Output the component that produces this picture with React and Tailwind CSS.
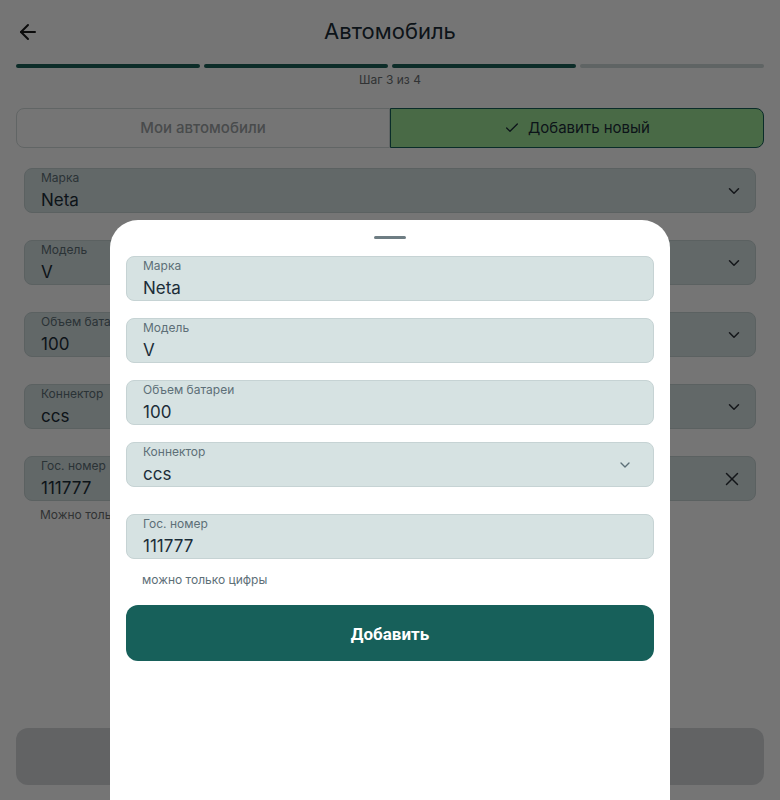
import { ArrowLeft, Check, ChevronDown, X } from 'lucide-react';

const pageFields = [
  { label: 'Марка', value: 'Neta', icon: 'chevron' },
  { label: 'Модель', value: 'V', icon: 'chevron' },
  { label: 'Объем батареи', value: '100', icon: 'chevron' },
  { label: 'Коннектор', value: 'ccs', icon: 'chevron' },
  { label: 'Гос. номер', value: '111777', icon: 'clear' },
];

function Field({ label, value, icon, iconClass }) {
  return (
    <div className="h-[45px] rounded-lg border border-[#c6d3d4] bg-[#d6e2e2] pl-4 pr-3 flex items-center">
      <div className="flex-1 min-w-0">
        <p className="text-[12px] leading-[14px] text-[#5d6f77]">{label}</p>
        <p className="text-[17px] leading-[20px] mt-[5px] text-[#1c2d38]">{value}</p>
      </div>
      {icon === 'chevron' && <ChevronDown className={iconClass} strokeWidth={2} />}
      {icon === 'clear' && <X className="w-[22px] h-[22px] text-[#2b3138]" strokeWidth={1.6} />}
    </div>
  );
}

export default function App() {
  return (
    <div className="relative w-[780px] h-[800px] overflow-hidden bg-white font-['Inter','Roboto',sans-serif]">
      {/* page behind the sheet */}
      <div className="px-4">
        <div className="h-[64px] flex items-center relative">
          <ArrowLeft className="w-6 h-6 text-[#1a1a1a] -mt-[1px]" strokeWidth={2} />
          <h1 className="absolute inset-x-0 text-center text-[22px] font-normal text-[#1c2d38] -mt-[1px]">Автомобиль</h1>
        </div>
        <div className="grid grid-cols-4 gap-1">
          <div className="h-1 rounded-full bg-[#1b6158]" />
          <div className="h-1 rounded-full bg-[#1b6158]" />
          <div className="h-1 rounded-full bg-[#1b6158]" />
          <div className="h-1 rounded-full bg-[#cfd9d9]" />
        </div>
        <p className="text-center text-[12px] leading-[16px] mt-[4px] text-[#6b6f72]">Шаг 3 из 4</p>
        <div className="grid grid-cols-2 mt-[20px]">
          <div className="h-[40px] rounded-l-lg border border-[#d4dcdc] flex items-center justify-center text-[15px] font-medium text-[#9ea3a6]">
            Мои автомобили
          </div>
          <div className="h-[40px] rounded-r-lg border border-[#17605a] bg-[#a0e89a] flex items-center justify-center gap-2 text-[15px] text-[#1c2d38]">
            <Check className="w-[16px] h-[16px]" strokeWidth={2} />
            Добавить новый
          </div>
        </div>
        <div className="px-2 mt-[20px] flex flex-col gap-[27px]">
          {pageFields.map((f) => (
            <Field key={f.label} {...f} iconClass="w-[18px] h-[18px] text-[#2b3138]" />
          ))}
        </div>
        <p className="px-2 ml-4 mt-[5px] text-[12px] text-[#6b6f72]">Можно только цифры</p>
        <div className="mt-[204px] h-[57px] rounded-xl bg-[#d6d8db]" />
      </div>

      {/* dim overlay */}
      <div className="absolute inset-0 bg-black/[0.54]" />

      {/* bottom sheet */}
      <div className="absolute left-[110px] top-[220px] w-[560px] h-[600px] bg-white rounded-t-[28px] px-4">
        <div className="mx-auto mt-[16px] w-8 h-[3px] rounded-full bg-[#6e7d83]" />
        <div className="mt-[17px] flex flex-col gap-[17px]">
          <Field label="Марка" value="Neta" />
          <Field label="Модель" value="V" />
          <Field label="Объем батареи" value="100" />
          <Field label="Коннектор" value="ccs" icon="chevron" iconClass="w-[16px] h-[16px] text-[#5d6f77] mr-[8px]" />
        </div>
        <div className="mt-[27px]">
          <Field label="Гос. номер" value="111777" />
        </div>
        <p className="ml-4 mt-[13px] text-[12px] leading-[16px] text-[#5d6f77]">можно только цифры</p>
        <button className="mt-[17px] w-full h-[56px] rounded-xl bg-[#17605a] text-white text-[17px] leading-[20px] font-bold font-['Roboto','Inter',sans-serif] pt-[2px]">
          Добавить
        </button>
      </div>
    </div>
  );
}
